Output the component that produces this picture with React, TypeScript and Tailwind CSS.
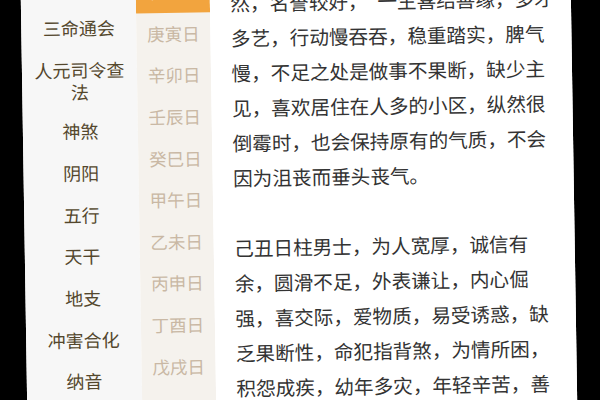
const navItems = [
  "三命通会",
  "人元司令查法",
  "神煞",
  "阴阳",
  "五行",
  "天干",
  "地支",
  "冲害合化",
  "纳音",
];

const days = [
  "己丑日",
  "庚寅日",
  "辛卯日",
  "壬辰日",
  "癸巳日",
  "甲午日",
  "乙未日",
  "丙申日",
  "丁酉日",
  "戊戌日",
  "己亥日",
];

const paragraphs = [
  [
    "然，名誉较好，“一生喜结善缘，多才",
    "多艺，行动慢吞吞，稳重踏实，脾气",
    "慢，不足之处是做事不果断，缺少主",
    "见，喜欢居住在人多的小区，纵然很",
    "倒霉时，也会保持原有的气质，不会",
    "因为沮丧而垂头丧气。",
  ],
  [
    "己丑日柱男士，为人宽厚，诚信有",
    "余，圆滑不足，外表谦让，内心倔",
    "强，喜交际，爱物质，易受诱惑，缺",
    "乏果断性，命犯指背煞，为情所困，",
    "积怨成疾，幼年多灾，年轻辛苦，善",
  ],
];

export default function App() {
  return (
    <div className="w-[600px] h-[400px] bg-black overflow-hidden font-['Noto_Sans_CJK_SC','Noto_Sans',sans-serif]">
      <div className="ml-[24px] -mt-[20px] w-[550px] h-[440px] flex rotate-[-0.9deg] bg-white">
        {/* Category list */}
        <div className="w-[115px] shrink-0 bg-[#f7f7f7] pt-[22.75px]">
          {navItems.map((item) =>
            item.length > 5 ? (
              <div
                key={item}
                className="h-[62px] pt-[4px] px-[10px] flex items-center justify-center text-center text-[18px] leading-[22px] text-[#54472d]"
              >
                {item}
              </div>
            ) : (
              <div
                key={item}
                className="h-[41.7px] flex items-center justify-center text-[18px] leading-[22px] text-[#54472d]"
              >
                {item}
              </div>
            )
          )}
        </div>

        {/* Day pillars */}
        <div className="w-[74px] shrink-0 bg-[#f5f2ed] overflow-hidden">
          <div className="-mt-[10.4px]">
            {days.map((day, i) => (
              <div
                key={day}
                className={
                  i === 0
                    ? "h-[41.6px] flex items-center justify-center bg-[#f2a43e] text-white text-[17.5px]"
                    : "h-[41.6px] flex items-center justify-center text-[#c9b8a4] text-[17.5px]"
                }
              >
                {day}
              </div>
            ))}
          </div>
        </div>

        {/* Article */}
        <div className="flex-1 bg-white pl-[20.5px] pt-[3.5px] text-[19.6px] leading-[35px] text-[#333333]">
          {paragraphs.map((lines, p) => (
            <div key={p} className={p > 0 ? "mt-[35px]" : ""}>
              {lines.map((line) => (
                <div key={line} className="whitespace-nowrap">
                  {line}
                </div>
              ))}
            </div>
          ))}
        </div>
      </div>
    </div>
  );
}
